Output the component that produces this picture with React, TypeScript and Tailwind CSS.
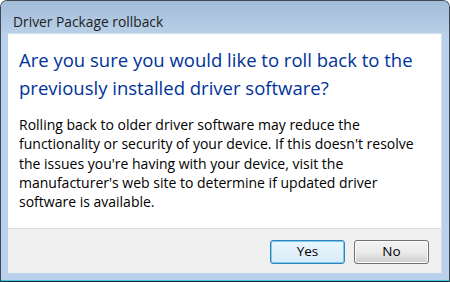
const font = { fontFamily: '"Open Sans", "Noto Sans", sans-serif' };

function DialogButton({ label, focused }: { label: string; focused?: boolean }) {
  return (
    <button
      className={
        focused
          ? 'w-[75px] h-[24px] rounded-[3px] border border-[#3c7fb1] bg-gradient-to-b from-[#eaf6fd] to-[#d9ecf8] text-[13.5px] text-black shadow-[inset_0_0_0_1px_#6fd0f5]'
          : 'w-[75px] h-[24px] rounded-[3px] border border-[#707070] bg-gradient-to-b from-[#f2f2f2] via-[#ebebeb] to-[#cfcfcf] text-[13.5px] text-black shadow-[inset_0_0_0_1px_#fcfcfc]'
      }
    >
      {label}
    </button>
  );
}

export default function App() {
  return (
    <div className="w-[450px] h-[282px] bg-white" style={font}>
      <div className="flex flex-col w-full h-full rounded-t-[7px] border border-[#3f4853] border-b-0 bg-[#b9d1ea] overflow-hidden">
        {/* title bar */}
        <div className="h-[32px] shrink-0 flex items-center pl-[12px] bg-gradient-to-b from-[#a3bcd8] to-[#b8cfe8]">
          <span className="text-[13.8px] text-[#1e1e1e] pt-[11px]">Driver Package rollback</span>
        </div>

        <div className="flex-1 flex flex-col px-[7px] pb-[7px]">
          <div className="flex-1 flex flex-col bg-white border border-[#cfe0f1] border-b-0 border-l-0">
            <div className="flex-1 pl-[11px] pt-[12px]">
              <h1 className="text-[18.5px] leading-[28px] text-[#003399] whitespace-nowrap">
                Are you sure you would like to roll back to the
                <br />
                previously installed driver software?
              </h1>
              <p className="mt-[13px] text-[14px] leading-[19.25px] text-black whitespace-nowrap">
                Rolling back to older driver software may reduce the
                <br />
                functionality or security of your device. If this doesn't resolve
                <br />
                the issues you're having with your device, visit the
                <br />
                manufacturer's web site to determine if updated driver
                <br />
                software is available.
              </p>
            </div>
            <div className="h-[45px] shrink-0 flex items-center justify-end gap-[9px] pr-[12px] pt-[1px] bg-[#f0f0f0] border-t border-[#dfdfdf]">
              <DialogButton label="Yes" focused />
              <DialogButton label="No" />
            </div>
          </div>
        </div>
        <div className="h-[1px] shrink-0 bg-[#4cc3dc]" />
        <div className="h-[1px] shrink-0 bg-[#1d2b36]" />
      </div>
    </div>
  );
}
